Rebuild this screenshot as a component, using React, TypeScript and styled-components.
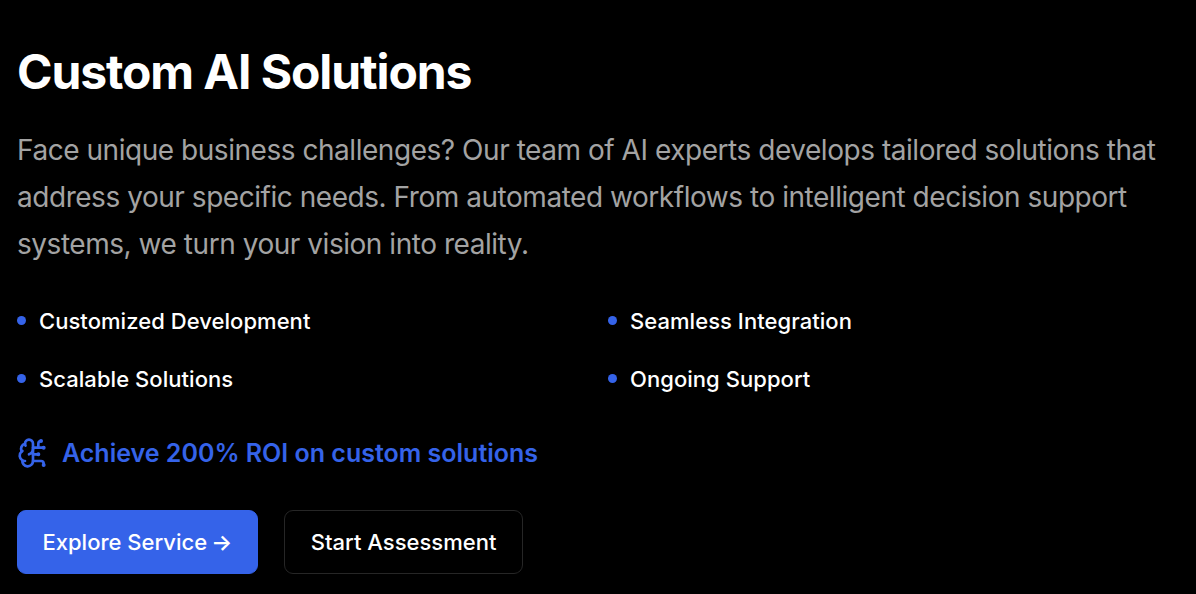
import React from 'react';
import styled, { createGlobalStyle } from 'styled-components';
import { BrainCircuit } from 'lucide-react';

const GlobalStyle = createGlobalStyle`
  html, body {
    margin: 0;
    padding: 0;
    background: #000;
  }
  body {
    font-family: Inter, "Liberation Sans", sans-serif;
  }
`;

const features = ['Customized Development', 'Seamless Integration', 'Scalable Solutions', 'Ongoing Support'];

const Section = styled.section`
  width: 1196px;
  height: 594px;
  padding: 42px 17px 0;
  box-sizing: border-box;
  background: #000;
  overflow: hidden;
`;

const Title = styled.h2`
  margin: 0 0 25px;
  font-size: 48px;
  line-height: 60px;
  font-weight: 700;
  letter-spacing: -1.1px;
  color: #fff;
`;

const Description = styled.p`
  margin: 0 0 35.5px;
  font-size: 28px;
  line-height: 47px;
  letter-spacing: -0.46px;
  color: #a3a3a3;
`;

const FeatureGrid = styled.ul`
  list-style: none;
  margin: 0 0 37px;
  padding: 0;
  display: grid;
  grid-template-columns: 1fr 1fr;
  column-gap: 20px;
  row-gap: 24px;
`;

const Feature = styled.li`
  display: flex;
  align-items: center;
  gap: 13px;
  font-size: 22px;
  line-height: 34px;
  font-weight: 500;
  letter-spacing: 0.05px;
  color: #fff;
`;

const Dot = styled.span`
  width: 9px;
  height: 9px;
  border-radius: 50%;
  background: #3563e9;
`;

const Roi = styled.div`
  display: flex;
  align-items: center;
  gap: 13px;
  margin-bottom: 37px;
  font-size: 25px;
  line-height: 40px;
  font-weight: 600;
  color: #3563e9;
`;

const Actions = styled.div`
  display: flex;
  gap: 26px;
`;

const Button = styled.button<{ $primary?: boolean }>`
  height: 64px;
  padding: 0 ${p => (p.$primary ? '24.5px' : '26px')};
  border-radius: 9px;
  border: 1px solid ${p => (p.$primary ? '#3563e9' : '#262626')};
  background: ${p => (p.$primary ? '#3563e9' : '#000')};
  color: #fff;
  font-family: inherit;
  font-size: 22px;
  font-weight: 500;
`;

const Arrow = styled.span`
  margin-left: -1.7px;
  font-weight: 600;
`;

export default function App() {
  return (
    <Section>
      <GlobalStyle />
      <Title>Custom AI Solutions</Title>
      <Description>
        Face unique business challenges? Our team of AI experts develops tailored solutions that address your specific needs. From automated workflows to intelligent decision support systems, we turn your vision into reality.
      </Description>
      <FeatureGrid>
        {features.map(f => (
          <Feature key={f}>
            <Dot />
            {f}
          </Feature>
        ))}
      </FeatureGrid>
      <Roi>
        <BrainCircuit size={32} />
        Achieve 200% ROI on custom solutions
      </Roi>
      <Actions>
        <Button $primary>Explore Service <Arrow>→</Arrow></Button>
        <Button>Start Assessment</Button>
      </Actions>
    </Section>
  );
}
